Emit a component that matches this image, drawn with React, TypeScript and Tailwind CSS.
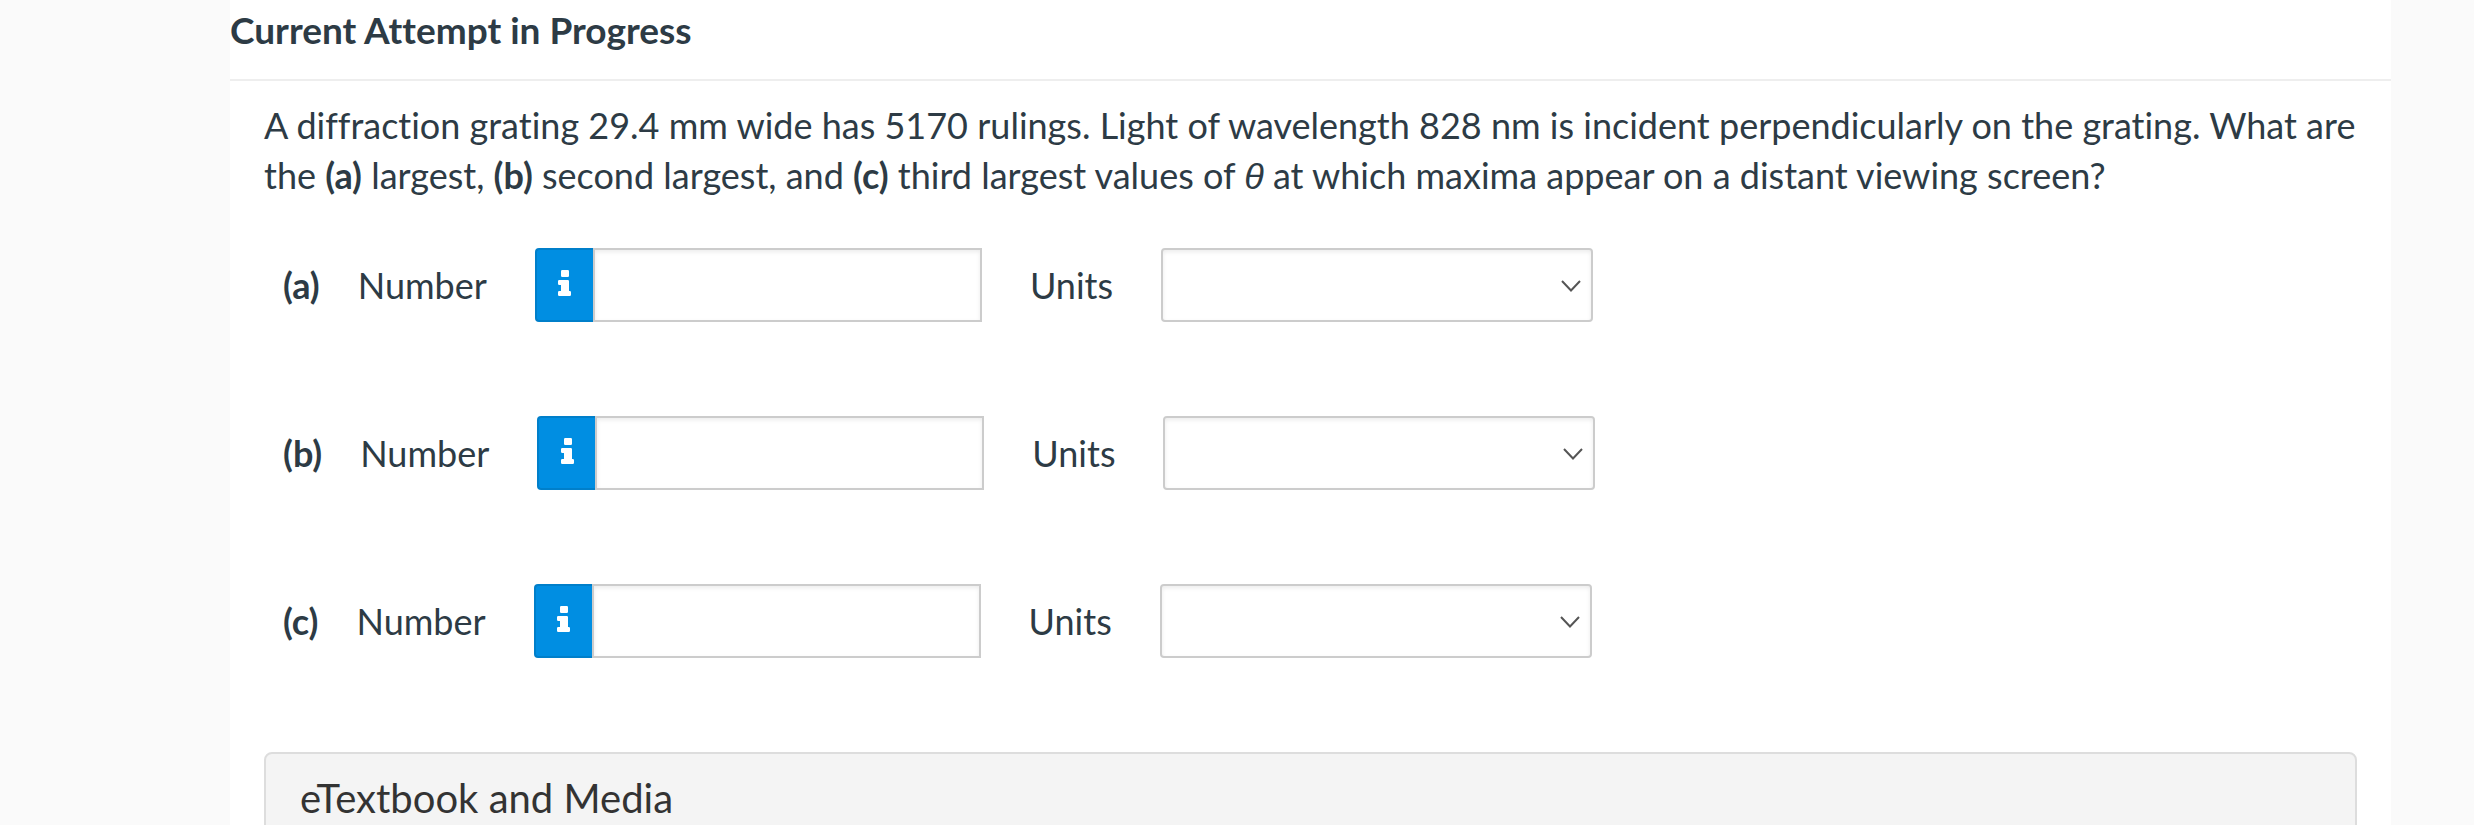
import { ChangeEvent, useState } from 'react';

interface Part {
  id: string;
  value: string;
  unit: string;
}

const initialParts: Part[] = [
  { id: 'a', value: '', unit: '' },
  { id: 'b', value: '', unit: '' },
  { id: 'c', value: '', unit: '' },
];

function InfoIcon() {
  return (
    <svg viewBox="0 0 13 26" className="h-[26px] w-[13px]" fill="currentColor" aria-hidden="true">
      <rect x="3" y="0" width="8" height="7" rx="1.2" />
      <path d="M1.2 10H9.8Q11 10 11 11.200V21H11.800Q13 21 13 22.200V24.800Q13 26 11.800 26H1.200Q0 26 0 24.800V22.200Q0 21 1.200 21H3V15H1.200Q0 15 0 13.800V11.200Q0 10 1.200 10Z" />
    </svg>
  );
}

interface AnswerRowProps {
  part: Part;
  onChange: (part: Part) => void;
}

function AnswerRow({ part, onChange }: AnswerRowProps) {
  return (
    <div className="flex items-center">
      <strong className="mr-[38px] font-bold">({part.id})</strong>
      <label htmlFor={`number-${part.id}`} className="mr-12">
        Number
      </label>
      <div className="flex h-[74px] w-[447px]">
        <button
          type="button"
          aria-label={`Help with part ${part.id}`}
          className="flex w-[58px] shrink-0 items-center justify-center rounded-l border-2 border-r-0 border-[#007fca] bg-[#008ee2] pb-1 text-white"
        >
          <InfoIcon />
        </button>
        <input
          id={`number-${part.id}`}
          type="text"
          value={part.value}
          onChange={(e: ChangeEvent<HTMLInputElement>) => onChange({ ...part, value: e.target.value })}
          className="min-w-0 flex-1 border-2 border-[#ccc] bg-white px-3 shadow-[inset_0_2px_4px_rgba(0,0,0,0.08)]"
        />
      </div>
      <label htmlFor={`units-${part.id}`} className="mr-12 ml-12">
        Units
      </label>
      {/* Chevron sits over the native select */}
      <div className="relative h-[74px] w-[432px]">
        <select
          id={`units-${part.id}`}
          value={part.unit}
          onChange={(e: ChangeEvent<HTMLSelectElement>) => onChange({ ...part, unit: e.target.value })}
          className="h-full w-full appearance-none rounded border-2 border-[#ccc] bg-white px-3 shadow-[inset_0_2px_4px_rgba(0,0,0,0.08)]"
        >
          <option value=""></option>
        </select>
        <svg
          viewBox="0 0 20 12"
          className="pointer-events-none absolute top-8 right-3 h-3 w-5"
          fill="none"
          stroke="#555"
          strokeWidth="2"
          aria-hidden="true"
        >
          <path d="M1 1L10 10.500L19 1" />
        </svg>
      </div>
    </div>
  );
}

export default function App() {
  const [parts, setParts] = useState<Part[]>(initialParts);

  const updatePart = (next: Part) => {
    setParts((prev) => prev.map((p) => (p.id === next.id ? next : p)));
  };

  return (
    <div className="h-screen overflow-hidden bg-[#fafafa] pr-[83px] pl-[230px] font-['Lato',sans-serif] text-[36px] leading-[50px] text-[#2d3b45] [font-variant-ligatures:none]">
      <main className="min-h-full bg-white">
        <h1 className="border-b-2 border-[#eee] pt-[5px] pb-6 text-[37px] leading-[50px] font-bold">
          Current Attempt in Progress
        </h1>

        <section className="px-[34px] pt-[19px]">
          <p>
            A diffraction grating 29.4 mm wide has 5170 rulings. Light of wavelength 828 nm is incident
            perpendicularly on the grating. What are the <b>(a)</b> largest, <b>(b)</b> second largest, and{' '}
            <b>(c)</b> third largest values of{' '}
            <i className="font-['Liberation_Sans',sans-serif] leading-none">θ</i> at which maxima appear on a
            distant viewing screen?
          </p>

          <form className="mt-12 flex flex-col gap-[94px] pl-[19px]">
            {parts.map((part) => (
              <AnswerRow key={part.id} part={part} onChange={updatePart} />
            ))}
          </form>

          {/* Resources */}
          <div className="mt-[94px] rounded-lg border-2 border-[#ddd] bg-[#f4f4f4] px-[34px] py-4">
            <h2 className="text-[40px] leading-[56px] text-[#333]">eTextbook and Media</h2>
          </div>
        </section>
      </main>
    </div>
  );
}
